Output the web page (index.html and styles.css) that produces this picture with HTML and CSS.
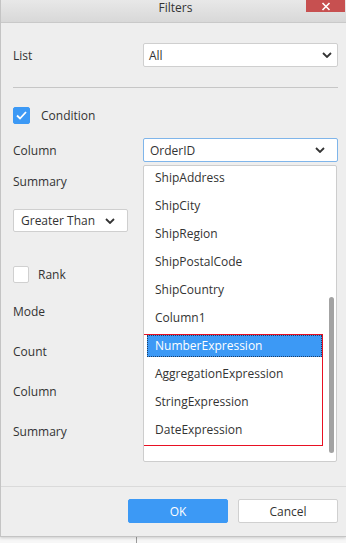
FILE: index.html
```html
<!DOCTYPE html>
<html>
<head>
<meta charset="utf-8">
<link rel="stylesheet" href="styles.css">
</head>
<body>
<div class="window">
  <div class="titlebar">
    <span class="title">Filters</span>
    <button class="close" aria-label="Close">
      <svg width="10" height="9" viewBox="0 0 10 9"><path d="M1.5 1 L8.5 8 M8.5 1 L1.5 8" stroke="#fff" stroke-width="1.6" fill="none"/></svg>
    </button>
  </div>
  <div class="content">
    <div class="row row-list">
      <span class="label">List</span>
      <div class="select">
        <span>All</span>
        <svg class="chev" width="10" height="6" viewBox="0 0 10 6"><path d="M1 1 L5 5 L9 1" stroke="#333" stroke-width="1.8" fill="none"/></svg>
      </div>
    </div>
    <div class="sep"></div>
    <div class="row row-cond">
      <span class="check checked">
        <svg width="11" height="9" viewBox="0 0 11 9"><path d="M1 4.5 L4 7.5 L10 1" stroke="#fff" stroke-width="1.8" fill="none"/></svg>
      </span>
      <span class="check-label">Condition</span>
    </div>
    <div class="row row-col">
      <span class="label">Column</span>
      <div class="select focused">
        <span>OrderID</span>
        <svg class="chev" width="10" height="6" viewBox="0 0 10 6"><path d="M1 1 L5 5 L9 1" stroke="#333" stroke-width="1.8" fill="none"/></svg>
      </div>
    </div>
    <div class="lrow r-summary"><span class="label">Summary</span></div>
    <div class="select small">
      <span>Greater Than</span>
      <svg class="chev" width="10" height="6" viewBox="0 0 10 6"><path d="M1 1 L5 5 L9 1" stroke="#333" stroke-width="1.8" fill="none"/></svg>
    </div>
    <div class="row row-rank">
      <span class="check"></span>
      <span class="rank-label">Rank</span>
    </div>
    <div class="lrow r-mode"><span class="label">Mode</span></div>
    <div class="lrow r-next"><span class="label">Count</span></div>
    <div class="lrow r-next"><span class="label">Column</span></div>
    <div class="lrow r-next"><span class="label">Summary</span></div>

    <div class="popup">
      <ul class="items">
        <li>ShipAddress</li>
        <li>ShipCity</li>
        <li>ShipRegion</li>
        <li>ShipPostalCode</li>
        <li>ShipCountry</li>
        <li>Column1</li>
        <li class="selected"><span>NumberExpression</span></li>
        <li>AggregationExpression</li>
        <li>StringExpression</li>
        <li>DateExpression</li>
      </ul>
      <div class="mark"></div>
      <div class="scrollbar"></div>
    </div>
  </div>
  <div class="footer">
    <button class="btn primary">OK</button>
    <button class="btn">Cancel</button>
  </div>
</div>
<div class="behind"></div>
</body>
</html>
```
FILE: styles.css
```css
* { box-sizing: border-box; }
html, body { margin: 0; padding: 0; }
body {
  background: #f7f7f7;
  font-family: "Open Sans", "Noto Sans", "DejaVu Sans", sans-serif;
  font-size: 12px;
  color: #333;
  width: 346px;
  height: 543px;
  overflow: hidden;
}
.window {
  width: 346px;
  height: 537px;
  display: flex;
  flex-direction: column;
  background: #eeeeee;
  border-left: 1px solid #c4c4c4;
  border-bottom: 1px solid #c4c4c4;
  box-shadow: 0 1px 3px rgba(0,0,0,0.18);
  position: relative;
}
.titlebar {
  height: 23px;
  flex: none;
  display: grid;
  grid-template-columns: 1fr auto 1fr;
  background: linear-gradient(#e8e8e8, #d8d8d8);
  border-bottom: 1px solid #c9c9c9;
}
.title {
  grid-column: 2;
  padding-left: 4px;
  line-height: 16px;
  color: #333;
}
.close {
  grid-column: 3;
  justify-self: end;
  align-self: start;
  width: 39px;
  height: 12px;
  margin-right: 1px;
  padding: 0;
  border: none;
  background: #c75050;
  display: flex;
  align-items: center;
  justify-content: center;
}
.close svg { display: block; }
.content {
  flex: 1;
  position: relative;
  padding: 20px 8px 0 12px;
  display: flex;
  flex-direction: column;
  align-items: flex-start;
}
.row { display: flex; align-items: center; width: 100%; }
.label { width: 130px; flex: none; color: #333; }
.row-list { height: 24px; }
.select {
  flex: 1;
  height: 24px;
  background: #fff;
  border: 1px solid #cfcfcf;
  border-radius: 2px;
  display: flex;
  align-items: center;
  justify-content: space-between;
  padding: 0 5px 0 5px;
  color: #333;
}
.select .chev { display: block; }
.select.focused { border-color: #7fb5ea; padding: 0 12px 0 6px; }
.select.small {
  flex: none;
  width: 115px;
  height: 23px;
  margin-top: 18px;
  padding: 0 12px 0 7px;
}
.sep {
  width: 100%;
  height: 1px;
  background: #c6c6c6;
  margin-top: 20px;
}
.row-cond { margin-top: 19px; height: 17px; }
.check {
  width: 17px;
  height: 17px;
  border-radius: 2px;
  border: 1px solid #d0d0d0;
  background: #fff;
  display: flex;
  align-items: center;
  justify-content: center;
  flex: none;
}
.check.checked { background: #3c99f5; border-color: #3c99f5; }
.check svg { display: block; }
.check-label { margin-left: 11px; }
.row-col { margin-top: 14px; height: 24px; }
.lrow { height: 20px; display: flex; align-items: center; }
.r-summary { margin-top: 9px; }
.row-rank { margin-top: 34px; height: 17px; }
.row-rank .check { width: 16px; height: 17px; }
.rank-label { margin-left: 9px; }
.r-mode { margin-top: 18px; }
.r-next { margin-top: 20px; }

.popup {
  position: absolute;
  left: 142px;
  top: 142px;
  width: 194px;
  height: 297px;
  background: #fff;
  border: 1px solid #cdcdcd;
  border-radius: 2px;
  overflow: hidden;
}
.items { list-style: none; margin: 0; padding: 0; }
.items li {
  height: 28px;
  line-height: 22px;
  padding: 1px 0 5px 11px;
  color: #333;
}
.items li.selected { padding: 1px 0 5px 3px; }
.items li.selected span {
  display: block;
  width: 175px;
  height: 22px;
  line-height: 20px;
  padding-left: 7px;
  background: #3c99f5;
  color: #fff;
  border: 1px dotted #1d3e66;
}
.mark {
  position: absolute;
  left: -1px;
  top: 168px;
  width: 180px;
  height: 112px;
  border: 1px solid #e81123;
}
.scrollbar {
  position: absolute;
  left: 185px;
  top: 131px;
  width: 5px;
  height: 156px;
  border-radius: 3px;
  background: #a3a3a3;
}
.footer {
  flex: none;
  height: 50px;
  border-top: 1px solid #dadada;
  display: flex;
  justify-content: flex-end;
  gap: 10px;
  padding: 12px 8px 13px 0;
}
.btn {
  width: 100px;
  height: 24px;
  border: 1px solid #d0d0d0;
  border-radius: 2px;
  background: #fff;
  font-family: inherit;
  font-size: 12px;
  color: #333;
  padding: 0;
}
.btn.primary { background: #3c99f5; border-color: #3c99f5; color: #fff; }
.behind {
  margin-left: 136px;
  width: 1px;
  height: 6px;
  background: #9a9a9a;
}
```
